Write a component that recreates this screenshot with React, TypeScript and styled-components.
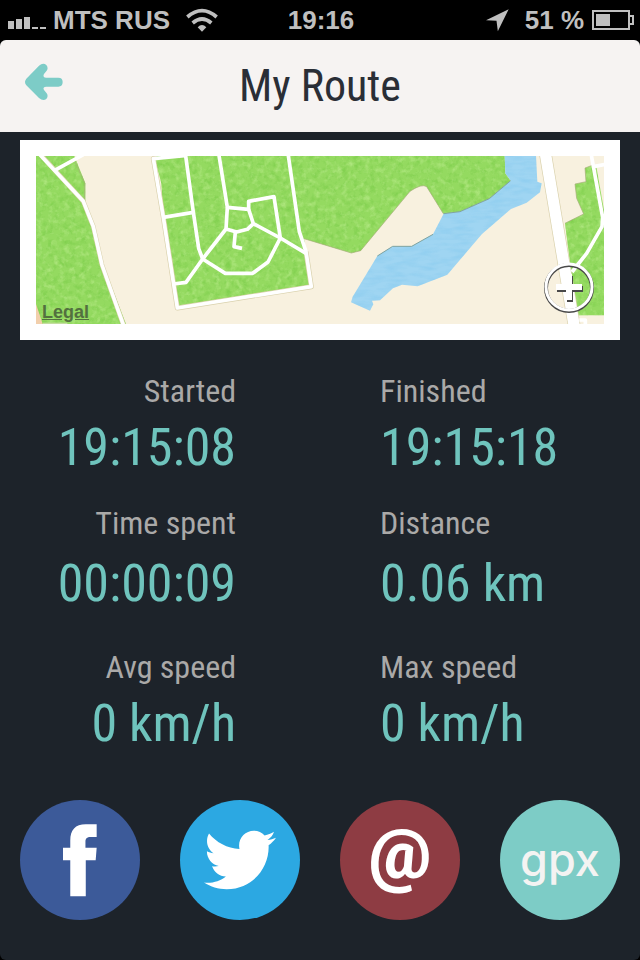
import React from 'react';
import styled, { createGlobalStyle } from 'styled-components';
import { FaTwitter } from 'react-icons/fa';

const GlobalStyle = createGlobalStyle`
  * { box-sizing: border-box; }
  html, body { margin: 0; background: #000; }
  button { font: inherit; color: inherit; border: 0; padding: 0; cursor: pointer; }
`;

const condensed = '"Roboto Condensed", Roboto, sans-serif';

const Screen = styled.div`
  min-height: 100vh;
  display: flex;
  flex-direction: column;
  background: #000;
  font-family: "Liberation Sans", Arial, sans-serif;
`;

const StatusBar = styled.div`
  display: grid;
  grid-template-columns: 1fr auto 1fr;
  align-items: center;
  height: 40px;
  padding: 0 6px 0 8px;
  color: #bfbfbf;
  font-size: 26px;
  line-height: 40px;
  font-weight: bold;
  white-space: nowrap;
`;

const StatusGroup = styled.div<{ $end?: boolean }>`
  display: flex;
  align-items: center;
  gap: ${({ $end }) => ($end ? '8px' : '6px')};
  justify-content: ${({ $end }) => ($end ? 'flex-end' : 'flex-start')};
  svg { flex: none; }
`;

const Carrier = styled.span`
  margin-right: 10px;
`;

const Percent = styled.span`
  margin-left: 8px;
`;

const Page = styled.main`
  flex: 1;
  display: flex;
  flex-direction: column;
  background: #1d232a;
  border-radius: 6px;
  overflow: hidden;
`;

const Header = styled.header`
  display: grid;
  grid-template-columns: 64px 1fr 64px;
  align-items: center;
  height: 92px;
  background: #f6f3f2;
`;

const BackButton = styled.button`
  display: flex;
  justify-content: flex-end;
  align-items: center;
  height: 64px;
  background: none;
  margin-bottom: 8px;
`;

const Title = styled.h1`
  margin: 0;
  text-align: center;
  font-family: ${condensed};
  font-size: 44px;
  line-height: 92px;
  font-weight: 400;
  color: #2a2e36;
`;

const MapCard = styled.section`
  position: relative;
  margin: 8px 20px 0;
  border: 16px solid #fff;
  background: #f8f1df;
`;

const MapDrawing = styled.svg`
  display: block;
  width: 100%;
  height: auto;
`;

const LegalLink = styled.a`
  position: absolute;
  left: 6px;
  bottom: 2px;
  font-size: 18px;
  line-height: 20px;
  font-weight: bold;
  color: #53703f;
`;

const ZoomButton = styled.button`
  position: absolute;
  right: 8px;
  bottom: 10px;
  width: 52px;
  height: 52px;
  background: none;
  svg { display: block; }
`;

const Stats = styled.dl`
  display: grid;
  grid-template-columns: 216fr 240fr;
  grid-template-rows: 132px 144px auto;
  column-gap: 144px;
  margin: 26px 20px 0;
  font-family: ${condensed};
`;

const Stat = styled.div<{ $end?: boolean; $roomy?: boolean }>`
  display: flex;
  flex-direction: column;
  gap: ${({ $roomy }) => ($roomy ? '4px' : '0')};
  text-align: ${({ $end }) => ($end ? 'right' : 'left')};
  white-space: nowrap;
`;

const StatLabel = styled.dt`
  font-size: 32px;
  line-height: 50px;
  color: #aaa9a8;
`;

const StatValue = styled.dd`
  margin: 0;
  font-size: 52px;
  line-height: 64px;
  font-weight: 400;
  color: #6fc4bd;
`;

const ShareBar = styled.nav`
  display: flex;
  justify-content: space-between;
  margin-top: auto;
  padding: 0 20px 40px;
`;

const ShareButton = styled.button<{ $color: string }>`
  display: flex;
  align-items: center;
  justify-content: center;
  width: 120px;
  height: 120px;
  border-radius: 50%;
  background: ${({ $color }) => $color};
  color: #fff;
`;

const AtSign = styled.span`
  padding-bottom: 12px;
  font-family: Roboto, sans-serif;
  font-size: 70px;
  line-height: 72px;
  font-weight: 900;
`;

const GpxText = styled.span`
  font-family: Inter, sans-serif;
  font-size: 45px;
  line-height: 56px;
  font-weight: 500;
  color: #f4f3f2;
`;

const stats = [
  { label: 'Started', value: '19:15:08' },
  { label: 'Finished', value: '19:15:18' },
  { label: 'Time spent', value: '00:00:09' },
  { label: 'Distance', value: '0.06 km' },
  { label: 'Avg speed', value: '0 km/h' },
  { label: 'Max speed', value: '0 km/h' },
];

function SignalIcon() {
  return (
    <svg width="39" height="17" viewBox="0 -4 39 17" fill="currentColor" aria-hidden="true">
      <path d="M0 5h6v8H0zM8 3h6v10H8zM16 1h6v12h-6zM24 11h6v2h-6zM32 11h6v2h-6z" />
    </svg>
  );
}

function WifiIcon() {
  return (
    <svg width="32" height="24" viewBox="558 22 96 72" aria-hidden="true">
      <g fill="none" stroke="currentColor" strokeWidth="11">
        <path d="M562 49Q606 11 650 49" />
        <path d="M578 67Q606 43 634 67" />
      </g>
      <path d="M593 80Q606 66 619 80L606 93Z" fill="currentColor" />
    </svg>
  );
}

function LocationIcon() {
  return (
    <svg width="23" height="23" viewBox="0 0 70 70" fill="currentColor" aria-hidden="true">
      <path d="M69 1L36 68L32 36L0 34Z" />
    </svg>
  );
}

function BatteryIcon() {
  return (
    <svg width="42" height="20" viewBox="0 0 42 20" aria-hidden="true">
      <path d="M1 1H37V19H1ZM38 6H41V14H38" fill="none" stroke="currentColor" strokeWidth="2" />
      <path d="M4 4h14v12H4z" fill="currentColor" />
    </svg>
  );
}

function BackIcon() {
  return (
    <svg width="40" height="38" viewBox="70 189 120 114" aria-hidden="true">
      <path
        d="M77 236L115 197Q127 187 137 195Q144 204 138 212L130 222Q125 233 136 233H173Q186 233 186 246Q186 260 173 260H136Q125 260 130 270L138 280Q144 289 137 297Q127 304 115 294L77 256Q69 246 77 236Z"
        fill="#7dccc7"
      />
    </svg>
  );
}

function FacebookIcon() {
  return (
    <svg width="34" height="73" viewBox="159 101 103 219" aria-hidden="true">
      <path
        d="M181 319V210H159V172H181V150C181 118 196 101 228 101H261V139H243C231 139 227 144 227 153V172H261L258 210H228V319Z"
        fill="#fff"
      />
    </svg>
  );
}

function RouteMap() {
  return (
    <MapDrawing viewBox="48 48 1704 504" role="img" aria-label="Route map">
      <defs>
        <filter id="grass" x="0" y="0" width="100%" height="100%" colorInterpolationFilters="sRGB">
          <feTurbulence type="fractalNoise" baseFrequency="0.06" numOctaves="3" seed="4" result="turbulence" />
          <feColorMatrix in="turbulence" values="0 0 0 0 0.46  0 0 0 0 0.79  0 0 0 0 0.27  1.5 0 0 0 -0.7" result="shade" />
          <feColorMatrix in="turbulence" values="0 0 0 0 0.74  0 0 0 0 0.93  0 0 0 0 0.56  0 1.5 0 0 -0.72" result="light" />
          <feMerge result="noise">
            <feMergeNode in="shade" />
            <feMergeNode in="light" />
          </feMerge>
          <feComposite in="noise" in2="SourceGraphic" operator="in" result="clipped" />
          <feMerge>
            <feMergeNode in="SourceGraphic" />
            <feMergeNode in="clipped" />
          </feMerge>
        </filter>
        <filter id="water" x="0" y="0" width="100%" height="100%" colorInterpolationFilters="sRGB">
          <feTurbulence type="fractalNoise" baseFrequency="0.02 0.08" numOctaves="2" seed="9" />
          <feColorMatrix values="0 0 0 0 0.5  0 0 0 0 0.78  0 0 0 0 0.93  1 0 0 0 -0.4" />
          <feComposite in2="SourceGraphic" operator="in" result="noise" />
          <feMerge>
            <feMergeNode in="SourceGraphic" />
            <feMergeNode in="noise" />
          </feMerge>
        </filter>
      </defs>
      <path d="M48 48H1752V552H48Z" fill="#f8f1df" />
      <g fill="#94da60" filter="url(#grass)">
        <path d="M48 48H163L196 130V195L222 255L250 375L318 552H48Z" />
        <path d="M402 48H1454L1456 100L1472 122L1408 176L1320 215L1270 221L1220 140Q1205 130 1170 154L1022 332L994 339L852 296L858 335L874 440L472 504L430 232L424 130Z" />
        <path d="M1695 84L1722 74L1752 80V526H1670L1635 250L1691 222L1670 175L1665 132L1698 125Z" />
      </g>
      <path d="M1728 74L1752 210V74Z" fill="#f8f1df" />
      <path d="M48 492L68 552H48Z" fill="#f2cfac" />
      <path d="M68 548H142V552H68Z" fill="#c4dda0" />
      <path
        d="M1454 48H1548L1552 125L1565 130L1560 157L1520 188L1473 207L1386 282L1282 404L1193 439L1146 434L1119 445L1080 481L1056 482L1060 493L1050 512L993 487L998 470L1072 348L1118 319H1175L1239 283L1271 221L1320 215L1408 176L1472 122L1456 100Z"
        fill="#9fd5f2"
        filter="url(#water)"
      />
      <path
        d="M1072 348L1118 319H1175L1239 283M1271 221L1320 215L1408 176L1472 122"
        fill="none"
        stroke="#7fa3a0"
        strokeWidth="3"
      />
      <path
        d="M852 296L994 339L1022 332L1170 154Q1205 130 1220 140L1270 221M1635 250L1691 222L1670 175L1665 132L1698 125L1695 84L1722 74M163 60L194 130V195"
        fill="none"
        stroke="#a7ae7c"
        strokeWidth="2"
      />
      <g fill="none" stroke="#d9d1ac" strokeLinejoin="round">
        <path d="M410 50L400 56L430 232L472 504L874 440L858 335" strokeWidth="15" />
        <path d="M1576 40L1663 560" strokeWidth="38" />
        <path d="M60 42L190 184L220 260L246 375L312 560" strokeWidth="14" />
      </g>
      <g fill="none" stroke="#fff" strokeWidth="11" strokeLinejoin="round">
        <path d="M56 40L190 184L220 260L246 375L312 560M104 91L190 44" />
        <path d="M500 46L400 56L430 232L472 504L874 440L858 335L838 275L804 40" />
        <path d="M496 40L520 217L536 325L548 357L616 400H698L744 366L781 294L762 170L686 184V208L622 202L596 40" />
        <path d="M430 232L520 217M460 432L498 427L548 357L618 267L622 202M618 267L650 276L682 268L700 251L686 208M700 251L781 294L858 340M646 276L642 320L666 325" />
        <path d="M1713 40L1748 232L1746 260L1700 340L1656 396M1720 80L1760 72M1678 540H1696V560" />
        <path d="M1576 40L1663 560" strokeWidth="34" />
      </g>
    </MapDrawing>
  );
}

function PlusIcon() {
  return (
    <svg width="52" height="52" viewBox="0 0 52 52" aria-hidden="true">
      <defs>
        <filter id="soft" x="-20%" y="-20%" width="140%" height="140%">
          <feGaussianBlur stdDeviation="0.7" />
        </filter>
      </defs>
      <g fill="none" stroke="#4a4a4a" filter="url(#soft)">
        <circle cx="25" cy="26" r="23" strokeWidth="4" />
        <path d="M26 14V40M13 27H39" strokeWidth="6" />
      </g>
      <g fill="none" stroke="#fff">
        <circle cx="25" cy="25" r="23" strokeWidth="3" />
        <path d="M25 12V38M12 25H38" strokeWidth="6" />
      </g>
    </svg>
  );
}

export default function App() {
  return (
    <Screen>
      <GlobalStyle />
      <StatusBar>
        <StatusGroup>
          <SignalIcon />
          <Carrier>MTS RUS</Carrier>
          <WifiIcon />
        </StatusGroup>
        <span>19:16</span>
        <StatusGroup $end>
          <LocationIcon />
          <Percent>51 %</Percent>
          <BatteryIcon />
        </StatusGroup>
      </StatusBar>
      <Page>
        <Header>
          <BackButton type="button" aria-label="Back">
            <BackIcon />
          </BackButton>
          <Title>My Route</Title>
        </Header>
        <MapCard>
          <RouteMap />
          <LegalLink href="#legal">Legal</LegalLink>
          <ZoomButton type="button" aria-label="Enlarge map">
            <PlusIcon />
          </ZoomButton>
        </MapCard>
        <Stats>
          {stats.map(({ label, value }, i) => (
            <Stat key={label} $end={i % 2 === 0} $roomy={i === 2 || i === 3}>
              <StatLabel>{label}</StatLabel>
              <StatValue>{value}</StatValue>
            </Stat>
          ))}
        </Stats>
        <ShareBar aria-label="Share">
          <ShareButton type="button" $color="#3c5a99" aria-label="Facebook">
            <FacebookIcon />
          </ShareButton>
          <ShareButton type="button" $color="#2ca8e2" aria-label="Twitter">
            <FaTwitter size={72} />
          </ShareButton>
          <ShareButton type="button" $color="#8e3c43" aria-label="Email">
            <AtSign>@</AtSign>
          </ShareButton>
          <ShareButton type="button" $color="#7dccc6">
            <GpxText>gpx</GpxText>
          </ShareButton>
        </ShareBar>
      </Page>
    </Screen>
  );
}
